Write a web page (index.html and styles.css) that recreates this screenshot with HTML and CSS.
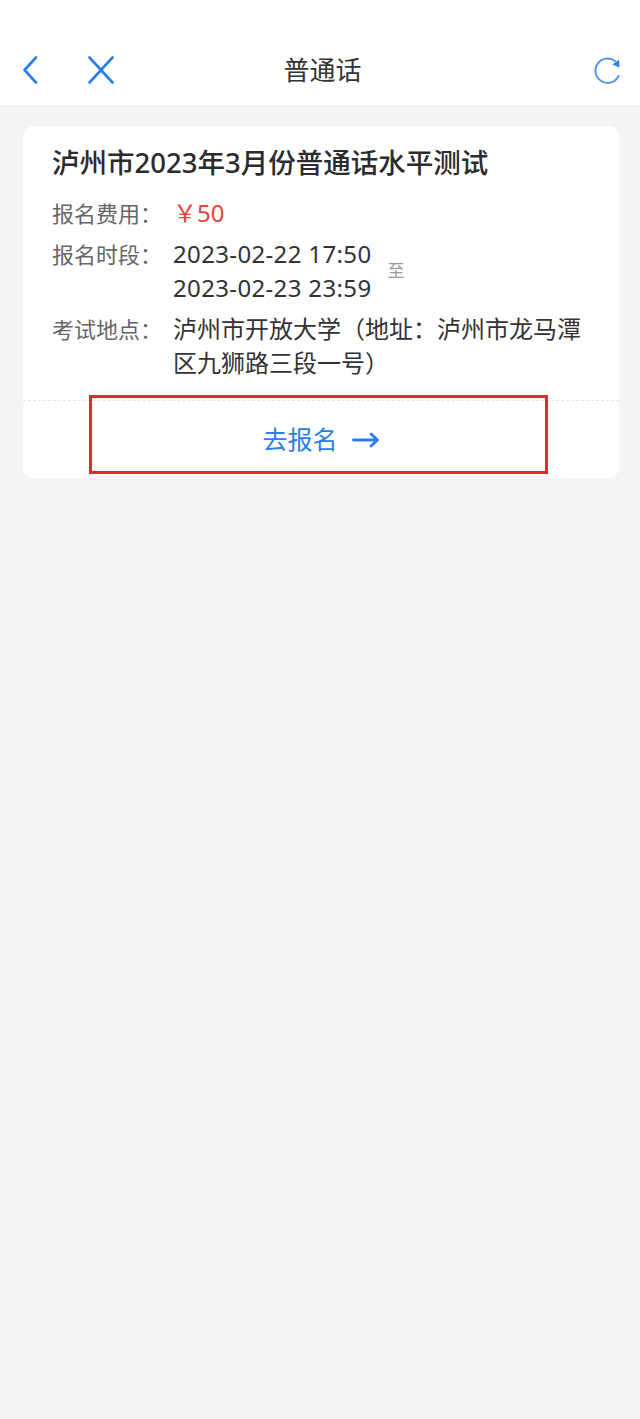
FILE: index.html
```html
<!DOCTYPE html>
<html lang="zh-CN">
<head>
<meta charset="utf-8">
<title>普通话</title>
<link rel="stylesheet" href="styles.css">
</head>
<body>
<header class="topbar">
  <div class="nav-left">
    <svg class="icon-back" width="16" height="28" viewBox="0 0 16 28"><path d="M14 1.5 L2.5 14 L14 26.5" fill="none" stroke="#2b7de9" stroke-width="2.6" stroke-linecap="round" stroke-linejoin="round"/></svg>
    <svg class="icon-close" width="26" height="28" viewBox="0 0 26 28"><path d="M1.5 1.5 L24.5 26.5 M24.5 1.5 L1.5 26.5" fill="none" stroke="#2b7de9" stroke-width="2.6" stroke-linecap="round"/></svg>
  </div>
  <div class="nav-title">普通话</div>
  <div class="nav-right">
    <svg class="icon-refresh" width="30" height="30" viewBox="0 0 32 32"><path d="M27.3 22.5 A13 13 0 1 1 23.6 6.4" fill="none" stroke="#4a90ec" stroke-width="2" stroke-linecap="round"/><path d="M20.8 10.2 L27.8 4.8 L28.2 13.3 Z" fill="#2b7de9"/></svg>
  </div>
</header>

<main class="content">
  <section class="card">
    <div class="card-body">
      <h1 class="card-title">泸州市2023年3月份普通话水平测试</h1>
      <div class="row">
        <span class="label">报名费用：</span>
        <span class="value price">￥50</span>
      </div>
      <div class="row">
        <span class="label">报名时段：</span>
        <div class="period">
          <div class="value dates">2023-02-22 17:50<br>2023-02-23 23:59</div>
          <span class="to">至</span>
        </div>
      </div>
      <div class="row">
        <span class="label">考试地点：</span>
        <span class="value address">泸州市开放大学（地址：泸州市龙马潭区九狮路三段一号）</span>
      </div>
    </div>
    <div class="card-foot">
      <span class="signup">去报名</span>
      <svg class="arrow" width="28" height="18" viewBox="0 0 28 18"><path d="M1.5 9 H25 M19 3 L25.5 9 L19 15" fill="none" stroke="#2b7de9" stroke-width="2.8" stroke-linecap="round" stroke-linejoin="round"/></svg>
      <div class="highlight"></div>
    </div>
  </section>
</main>
</body>
</html>
```

FILE: styles.css
```css
html, body {
  margin: 0;
  padding: 0;
}
body {
  background: #f5f5f5;
  font-family: "Noto Sans", "Noto Sans CJK SC", sans-serif;
  color: #333;
  min-height: 1419px;
}
.topbar {
  height: 105px;
  background: #fff;
  box-sizing: border-box;
  padding-top: 35px;
  display: flex;
  align-items: center;
}
.nav-left {
  display: flex;
  align-items: center;
  padding-left: 22px;
  gap: 50px;
  flex: 1;
}
.nav-title {
  font-size: 26px;
  color: #333;
  text-align: center;
  flex: 0 0 auto;
  line-height: 1;
}
.nav-right {
  flex: 1;
  display: flex;
  justify-content: flex-end;
  padding-right: 17px;
}
.icon-back, .icon-close, .icon-refresh {
  display: block;
}
.content {
  padding: 21px 21px 0 23px;
}
.card {
  background: #fff;
  border-radius: 10px;
}
.card-body {
  padding: 17px 28px 20px 29px;
}
.card-title {
  margin: 0 0 13px 0;
  font-size: 27.5px;
  font-weight: 500;
  line-height: 40px;
  color: #2b2b2b;
}
.row {
  display: flex;
  align-items: flex-start;
  line-height: 34px;
  margin-top: 7px;
}
.row:first-of-type {
  margin-top: 0;
}
.label {
  flex: 0 0 121px;
  font-size: 22px;
  color: #666;
}
.value {
  font-size: 24px;
  color: #333;
}
.dates {
  letter-spacing: 0.35px;
}
.price {
  color: #e8453c;
}
.period {
  display: flex;
  align-items: center;
}
.to {
  font-size: 17px;
  color: #999;
  margin-left: 16px;
}
.address {
  flex: 1;
}
.card-foot {
  position: relative;
  height: 77px;
  border-top: 1px dashed #e6e6e6;
  display: flex;
  align-items: center;
  justify-content: center;
  gap: 14px;
}
.signup {
  font-size: 25px;
  color: #2b7de9;
  line-height: 1;
}
.arrow {
  display: block;
}
.highlight {
  position: absolute;
  left: 66px;
  top: -6px;
  width: 459px;
  height: 79px;
  box-sizing: border-box;
  border: 3px solid #e8262b;
}
```
